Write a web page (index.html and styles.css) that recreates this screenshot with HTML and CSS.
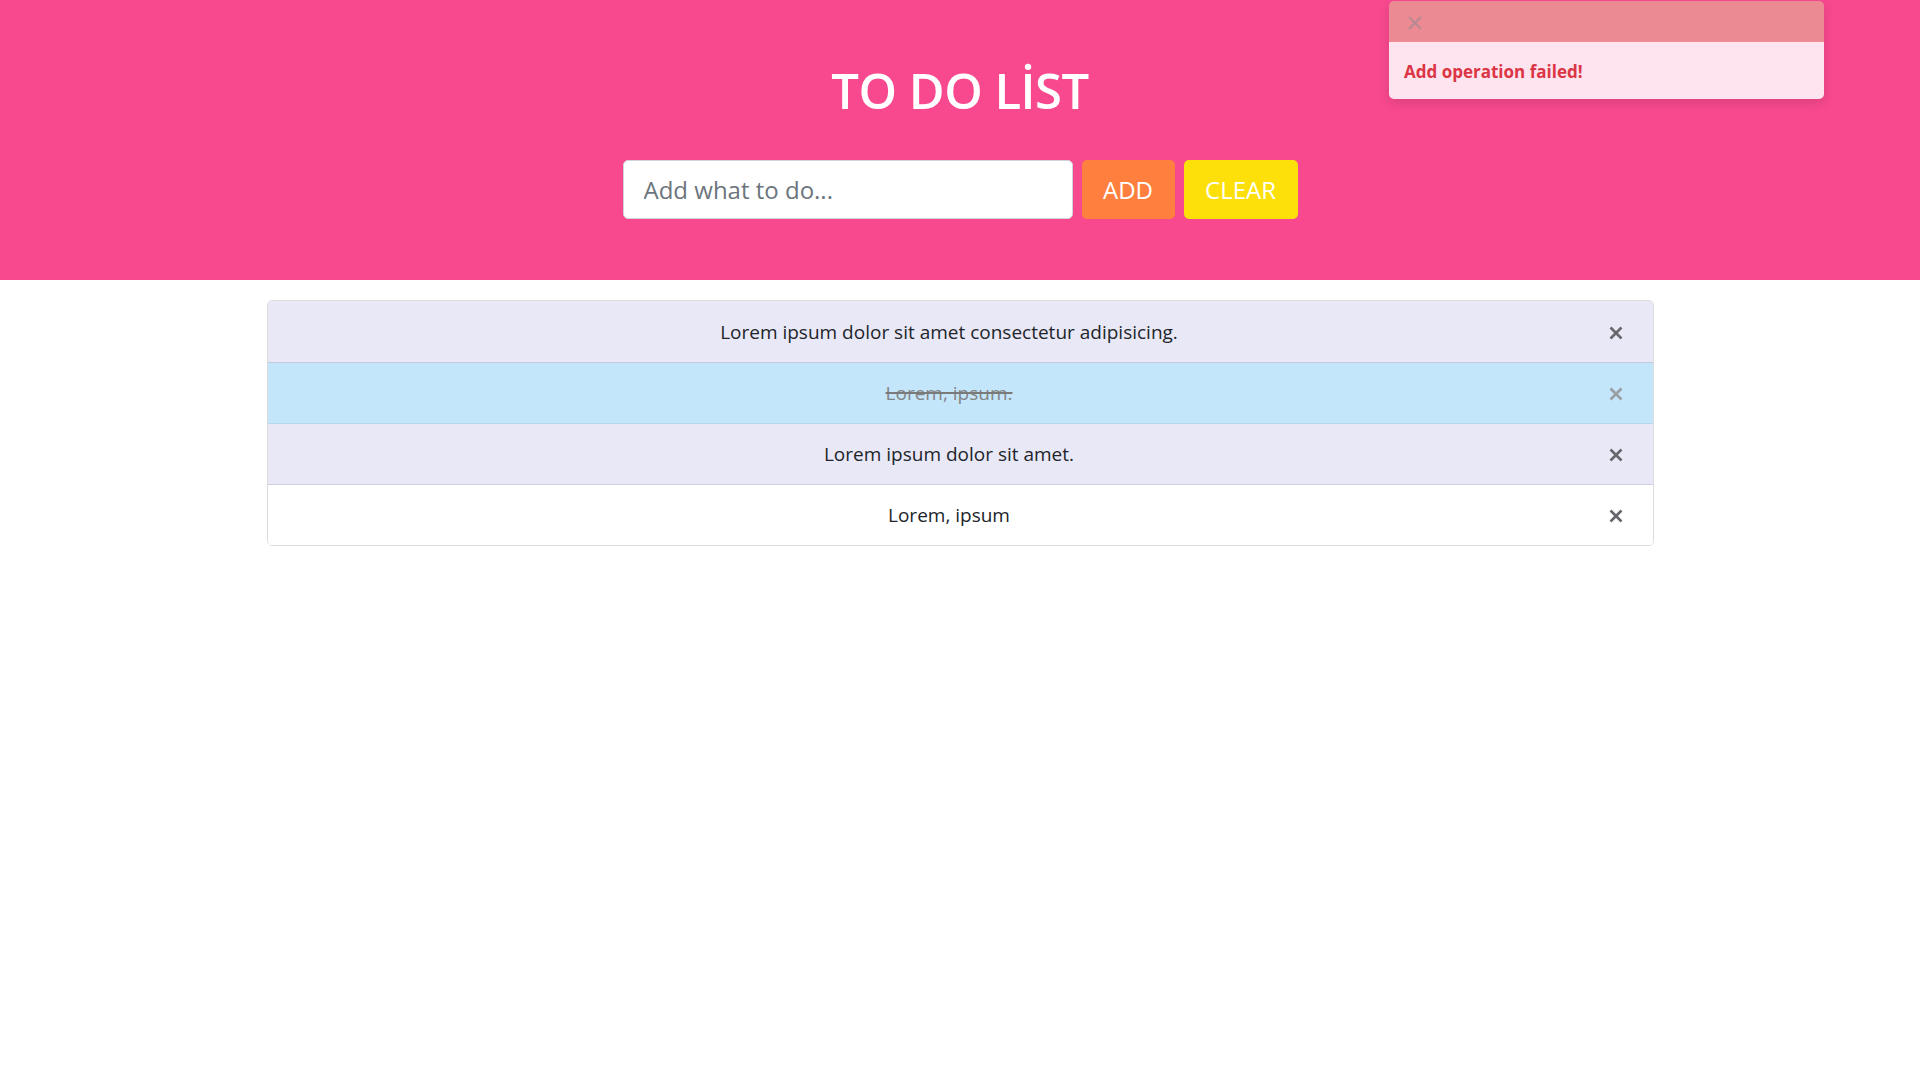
FILE: index.html
```html
<!DOCTYPE html>
<html lang="en">
<head>
<meta charset="utf-8">
<title>To Do List</title>
<link rel="stylesheet" href="styles.css">
</head>
<body>
<header class="hero">
  <h1 class="hero-title">TO DO LİST</h1>
  <form class="add-form">
    <input class="add-input" type="text" placeholder="Add what to do...">
    <button type="button" class="btn btn-add">ADD</button>
    <button type="button" class="btn btn-clear">CLEAR</button>
  </form>
</header>

<main class="list-wrap">
  <ul class="todo-list">
    <li class="todo-item item-lavender">
      <span class="todo-text">Lorem ipsum dolor sit amet consectetur adipisicing.</span>
      <button class="todo-close" aria-label="Delete"><svg viewBox="0 0 14 14" width="14" height="14"><path d="M1.5 1.5 L12.5 12.5 M12.5 1.5 L1.5 12.5"/></svg></button>
    </li>
    <li class="todo-item item-done">
      <span class="todo-text">Lorem, ipsum.</span>
      <button class="todo-close" aria-label="Delete"><svg viewBox="0 0 14 14" width="14" height="14"><path d="M1.5 1.5 L12.5 12.5 M12.5 1.5 L1.5 12.5"/></svg></button>
    </li>
    <li class="todo-item item-lavender">
      <span class="todo-text">Lorem ipsum dolor sit amet.</span>
      <button class="todo-close" aria-label="Delete"><svg viewBox="0 0 14 14" width="14" height="14"><path d="M1.5 1.5 L12.5 12.5 M12.5 1.5 L1.5 12.5"/></svg></button>
    </li>
    <li class="todo-item">
      <span class="todo-text">Lorem, ipsum</span>
      <button class="todo-close" aria-label="Delete"><svg viewBox="0 0 14 14" width="14" height="14"><path d="M1.5 1.5 L12.5 12.5 M12.5 1.5 L1.5 12.5"/></svg></button>
    </li>
  </ul>
</main>

<div class="toast">
  <div class="toast-header">
    <button class="toast-close" aria-label="Close"><svg viewBox="0 0 16 16" width="16" height="16"><path d="M2 2 L14 14 M14 2 L2 14"/></svg></button>
  </div>
  <div class="toast-body">Add operation failed!</div>
</div>
</body>
</html>
```

FILE: styles.css
```css
* { box-sizing: border-box; }

html, body {
  margin: 0;
  padding: 0;
  background: #ffffff;
  font-family: "Open Sans", "Noto Sans", sans-serif;
  color: #212529;
}

.hero {
  background: #f8498e;
  height: 280px;
  display: flex;
  flex-direction: column;
  align-items: center;
}

.hero-title {
  margin: 61px 0 0;
  font-size: 49px;
  line-height: 59px;
  font-weight: 600;
  color: #ffffff;
  letter-spacing: -0.5px;
}

.add-form {
  margin-top: 40px;
  display: flex;
  gap: 9px;
}

.add-input {
  width: 450px;
  height: 59px;
  border: 1px solid #ced4da;
  border-radius: 5px;
  padding: 0 20px;
  font-family: inherit;
  font-size: 24px;
  color: #495057;
  background: #fff;
  outline: none;
}
.add-input::placeholder { color: #6c757d; }

.btn {
  height: 59px;
  border: none;
  border-radius: 5px;
  padding: 0;
  font-family: inherit;
  font-size: 24px;
  color: #ffffff;
  cursor: pointer;
}
.btn-add { background: #ff7f3e; width: 93px; }
.btn-clear { background: #fde00a; width: 114px; }

.list-wrap {
  width: 1387px;
  margin: 20px auto 0;
}

.todo-list {
  list-style: none;
  margin: 0;
  padding: 0;
  border: 1px solid #dcdcdc;
  border-radius: 5px;
  overflow: hidden;
}

.todo-item {
  display: flex;
  align-items: center;
  height: 61px;
  padding: 0 26px;
  border-top: 1px solid #cfcde0;
  background: #ffffff;
  font-size: 19px;
}
.todo-item:first-child { border-top: none; }

.item-lavender { background: #e9e8f7; }
.item-done { background: #c4e6fb; border-top-color: #c6c8dd; }
.item-done + .todo-item { border-top-color: #b9d6ea; }

.todo-text {
  flex: 1;
  text-align: center;
}
.item-done .todo-text {
  color: #838486;
  text-decoration: line-through;
  text-decoration-color: #7a7a7a;
  text-decoration-thickness: 2px;
}

.todo-close {
  width: 22px;
  height: 22px;
  margin-top: 2px;
  padding: 0;
  border: none;
  background: transparent;
  display: flex;
  align-items: center;
  justify-content: center;
  cursor: pointer;
}
.todo-close svg path {
  stroke: #66666b;
  stroke-width: 2.6;
  fill: none;
}
.item-done .todo-close svg path { stroke: #999ea4; }

.toast {
  position: absolute;
  top: 1px;
  right: 96px;
  width: 435px;
  border-radius: 5px;
  overflow: hidden;
  box-shadow: 0 4px 12px rgba(0, 0, 0, 0.12);
}

.toast-header {
  height: 41px;
  background: #ec8a94;
  display: flex;
  align-items: center;
  padding: 3px 18px 0;
}

.toast-close {
  width: 16px;
  height: 16px;
  padding: 0;
  border: none;
  background: transparent;
  display: flex;
}
.toast-close svg path {
  stroke: #b68a93;
  stroke-width: 2;
  fill: none;
}

.toast-body {
  background: #fde4ef;
  height: 57px;
  padding: 18px 15px 0;
  font-size: 17px;
  font-weight: 700;
  color: #dc3545;
}
```
